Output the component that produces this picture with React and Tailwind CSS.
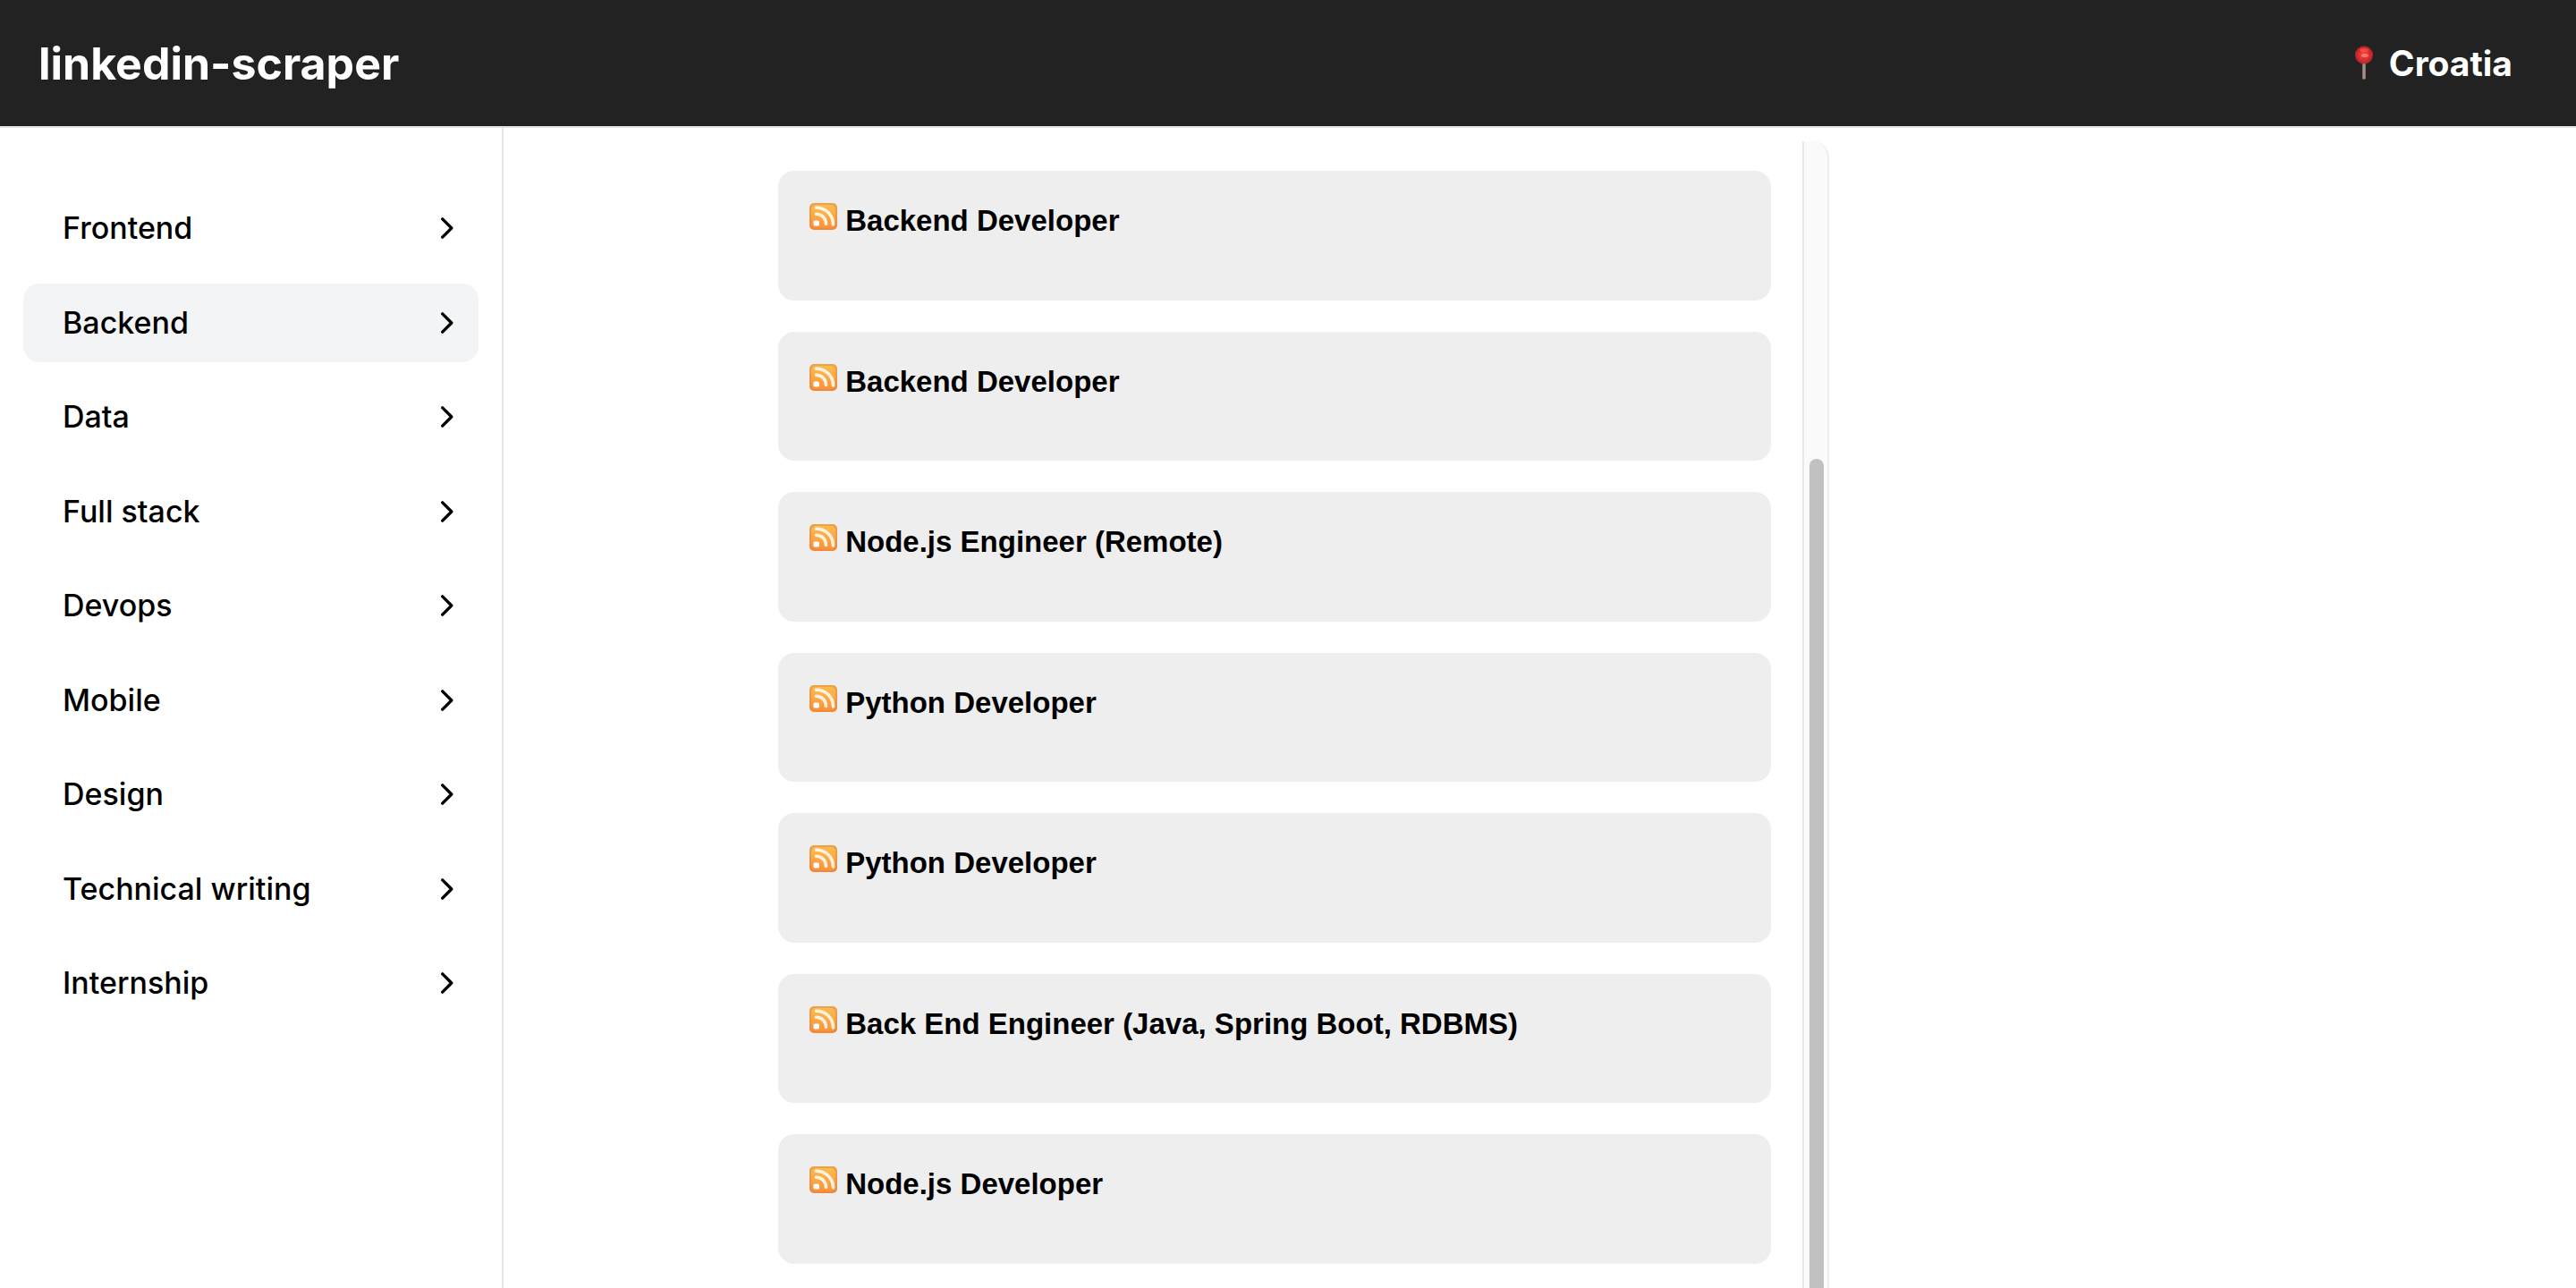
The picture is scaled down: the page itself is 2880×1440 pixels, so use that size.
const categories = [
  "Frontend",
  "Backend",
  "Data",
  "Full stack",
  "Devops",
  "Mobile",
  "Design",
  "Technical writing",
  "Internship",
];

const jobs = [
  "Backend Developer",
  "Backend Developer",
  "Node.js Engineer (Remote)",
  "Python Developer",
  "Python Developer",
  "Back End Engineer (Java, Spring Boot, RDBMS)",
  "Node.js Developer",
];

function PinIcon() {
  return (
    <svg className="h-10 w-5 shrink-0" viewBox="0 0 20 40" aria-hidden="true">
      <defs>
        <radialGradient id="pin-ball" cx="0.5" cy="0.5" r="0.5">
          <stop offset="0" stopColor="#f0584e" />
          <stop offset="0.55" stopColor="#e02f30" />
          <stop offset="0.88" stopColor="#c81f22" />
          <stop offset="1" stopColor="#a3393a" />
        </radialGradient>
        <linearGradient id="pin-stick" x1="0" x2="1" y1="0" y2="0">
          <stop offset="0" stopColor="#6f625c" />
          <stop offset="0.5" stopColor="#b3a59d" />
          <stop offset="1" stopColor="#6f625c" />
        </linearGradient>
      </defs>
      <rect x="8" y="18" width="4" height="19.5" rx="1" fill="url(#pin-stick)" />
      <circle cx="10" cy="10.5" r="10" fill="url(#pin-ball)" />
      <ellipse cx="10" cy="5" rx="5" ry="2" fill="#f2605c" opacity="0.6" />
      <ellipse cx="11" cy="11" rx="4" ry="2" fill="#ff9080" opacity="0.6" />
      <rect x="8" y="13" width="4" height="7" rx="1" fill="#b93a3a" opacity="0.6" />
    </svg>
  );
}

function FeedIcon() {
  return (
    <svg className="size-[31px] shrink-0" viewBox="0 0 31 31" aria-hidden="true">
      <defs>
        <linearGradient id="feed-face" x1="0" x2="0" y1="0" y2="1">
          <stop offset="0" stopColor="#fcbb50" />
          <stop offset="0.5" stopColor="#fca844" />
          <stop offset="1" stopColor="#fb9038" />
        </linearGradient>
        <linearGradient id="feed-edge" x1="0" x2="0" y1="0" y2="1">
          <stop offset="0" stopColor="#eaa34a" />
          <stop offset="1" stopColor="#f0883c" />
        </linearGradient>
      </defs>
      <rect x="0" y="1" width="31" height="30" rx="5" fill="url(#feed-edge)" />
      <rect x="2" y="3" width="27" height="26" rx="5" fill="url(#feed-face)" />
      <rect x="4.5" y="20.5" width="6.5" height="6" rx="1.500" fill="#fff" />
      <g fill="none" stroke="#fff3df" strokeWidth="3.6" strokeLinecap="round">
        <path d="M7.500 13.200c6.500 0 11 4.800 11 11.300" />
        <path d="M7.500 6.200c10.500 0 19 8 19 18.800" />
      </g>
    </svg>
  );
}

function ChevronIcon() {
  return (
    <svg
      className="h-6 w-[14px] shrink-0"
      viewBox="0 0 14 24"
      fill="none"
      stroke="currentColor"
      strokeWidth="3.3"
      strokeLinecap="round"
      strokeLinejoin="round"
      aria-hidden="true"
    >
      <path d="M1.700 1.800 11.800 12 1.700 22.200" />
    </svg>
  );
}

export default function App() {
  return (
    <div className="flex h-screen flex-col overflow-hidden bg-white text-black">
      <header className="flex h-[143px] shrink-0 items-center justify-between border-b-2 border-[#e5e2ea] bg-[#222222] pr-[71px] pl-[43px] font-['Inter',sans-serif] font-bold text-white">
        <h1 className="text-[50px] leading-[60px]">linkedin-scraper</h1>
        <button type="button" className="flex items-center gap-[18px] text-[39px] leading-[48px]">
          <PinIcon />
          Croatia
        </button>
      </header>

      <div className="grid min-h-0 flex-1 grid-cols-[1fr_42%_1fr]">
        <nav className="w-[563px] border-r-2 border-[#e5e4eb] px-[26px] pt-[68px] font-['Inter',sans-serif] text-[34px] leading-[40px] font-medium">
          <ul className="flex h-[932px] flex-col justify-between">
            {categories.map((name) => (
              <li key={name}>
                <button
                  type="button"
                  aria-current={name === "Backend" ? "page" : undefined}
                  className="flex h-[88px] w-full items-center justify-between rounded-[18px] pr-7 pl-[44px] aria-[current=page]:bg-gray-100"
                >
                  {name}
                  <ChevronIcon />
                </button>
              </li>
            ))}
          </ul>
        </nav>

        <main className="flex min-h-0 pt-[15px]">
          <ul className="grid h-[1255px] min-w-0 flex-1 auto-rows-fr gap-[35px] px-[35px] pt-[33px]">
            {jobs.map((title, index) => (
              <li
                key={index}
                className="flex items-start gap-[9px] rounded-[18px] bg-[#eeeeee] px-[35px] pt-[35px] font-['Liberation_Sans',Arial,sans-serif]"
              >
                <FeedIcon />
                <h2 className="text-[33px] leading-[42px] font-bold">{title}</h2>
              </li>
            ))}
          </ul>
          <div className="w-[30px] shrink-0 overflow-hidden rounded-tr-[18px] border-x-2 border-r-[#ededed] border-l-[#e8e8e8] bg-[#fafafa] pt-[355px] pr-1 pl-[6px]">
            <div className="h-full w-full rounded-t-full bg-[#c1c1c1]" />
          </div>
        </main>
      </div>
    </div>
  );
}
